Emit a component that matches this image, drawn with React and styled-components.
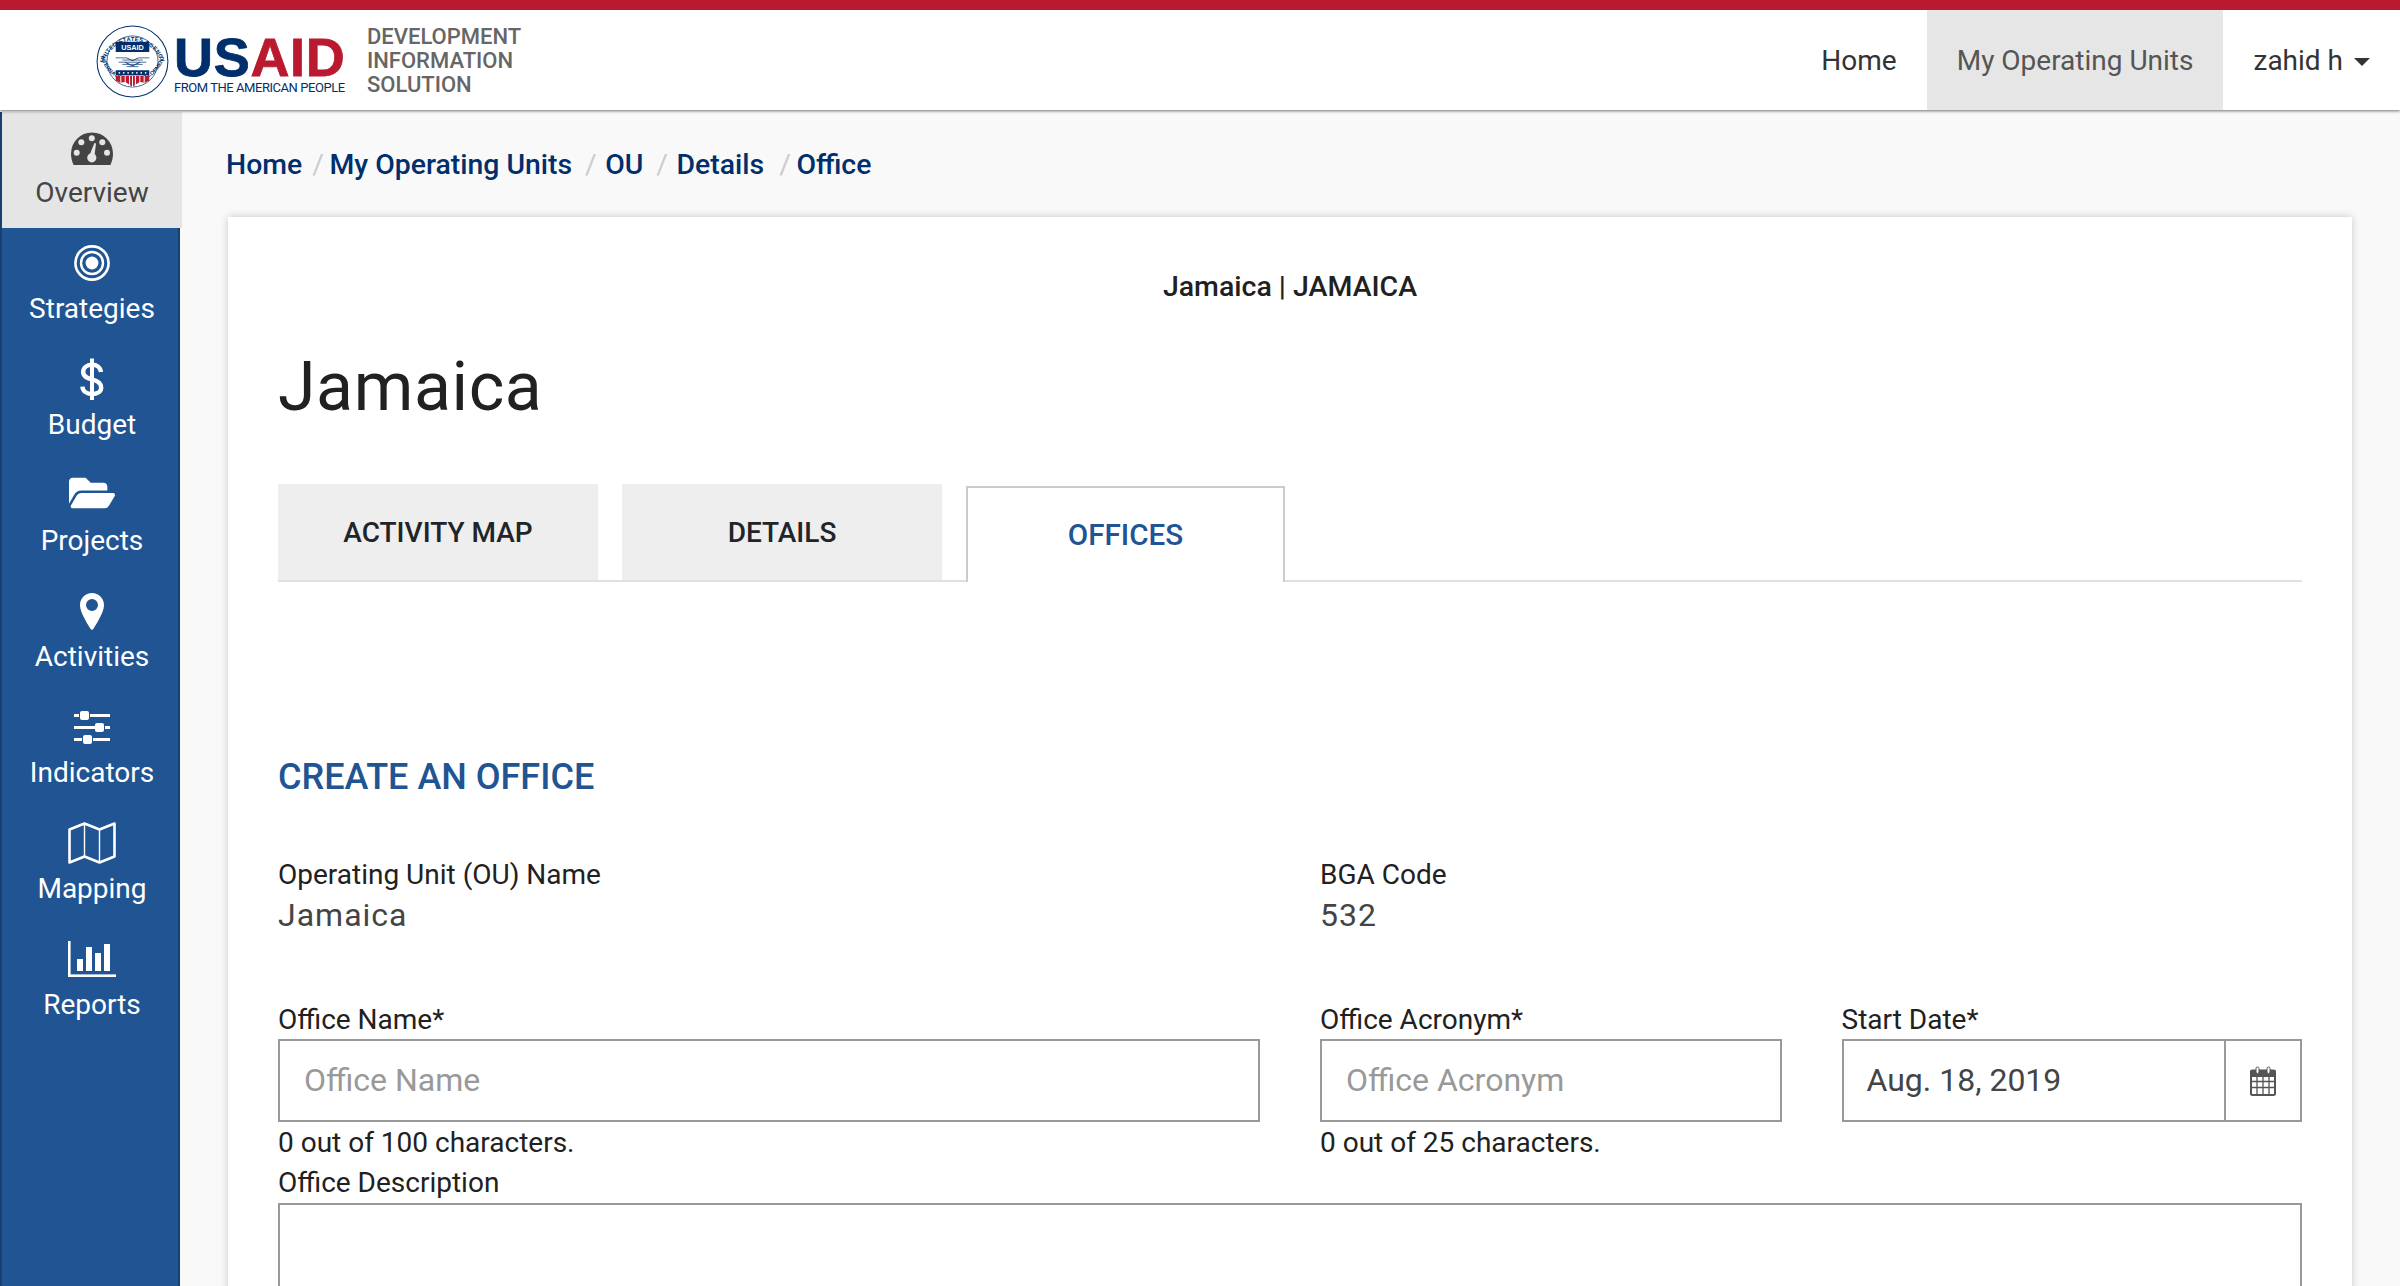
import React from "react";
import styled, { createGlobalStyle } from "styled-components";
import { FaFolderOpen } from "react-icons/fa";

const Global = createGlobalStyle`
  html, body { margin: 0; padding: 0; height: 1286px; overflow: hidden; background: #f9f9f9; }
  body { font-family: Roboto, "Liberation Sans", sans-serif; color: #212121; }
  * { box-sizing: border-box; }
`;

const Page = styled.div`
  width: 2400px; height: 1286px; overflow: hidden; display: flex; flex-direction: column;
`;
const Header = styled.header`
  flex: none; height: 110px; background: #fff; border-top: 10px solid #ba1a30;
  display: flex; align-items: stretch; justify-content: space-between;
  box-shadow: 0 1px 3px rgba(0,0,0,.55); position: relative; z-index: 2;
`;
const Brand = styled.div`
  display: flex; align-items: center; padding-left: 96px;
`;
const Seal = styled.svg` width: 73px; height: 73px; flex: none; display: block; margin-top: 2px; `;
const Wordmark = styled.div`
  margin-left: 5px; width: 170px; margin-top: 9px; display: flex; flex-direction: column; font-family: "Liberation Sans", sans-serif;
`;
const WordTop = styled.div`
  font-size: 54px; line-height: 44px; height: 44px; font-weight: 700; letter-spacing: .7px; color: #002f6c;
  -webkit-text-stroke: .8px currentColor; white-space: nowrap;
`;
const Red = styled.span` color: #ba1a30; `;
const WordSub = styled.div`
  font-family: Roboto, sans-serif; font-size: 13px; line-height: 14px; margin-top: 2px; color: #002f6c;
  letter-spacing: -.45px; white-space: nowrap;
`;
const BrandTitle = styled.div`
  margin: 2px 0 0 23px; font-size: 22px; line-height: 24px; font-weight: 500; color: #666;
`;
const TopNav = styled.nav` display: flex; align-items: stretch; `;
const TopLink = styled.div`
  display: flex; align-items: center; padding: 0 30px; font-size: 28px;
  color: ${p => p.$active ? "#555" : "#333"}; background: ${p => p.$active ? "#e6e6e6" : "transparent"};
`;
const Caret = styled.span`
  display: inline-block; margin-left: 11px; margin-top: 3px; border-top: 8px solid #333;
  border-left: 8px solid transparent; border-right: 8px solid transparent;
`;

const Body = styled.div` flex: 1; display: flex; min-height: 0; `;
const Side = styled.aside`
  flex: none; width: 180px; background: #205493; border-left: 2px solid #163f73; border-right: 2px solid #163f73;
  display: flex; flex-direction: column; margin-top: 2px;
`;
const SideItem = styled.div`
  height: 116px; flex: none; width: 180px; display: flex; flex-direction: column; align-items: center;
  padding-top: 16px; font-size: 28px;
  color: ${p => p.$active ? "#444" : "#fff"};
  background: ${p => p.$active ? "#e5e5e5" : "transparent"};
`;
const IconBox = styled.div`
  height: 38px; width: 50px; display: flex; align-items: center; justify-content: center; flex: none;
  padding: ${p => p.$down || 0} 0 ${p => p.$up || 0};
`;
const SideLabel = styled.div` line-height: 32px; margin-top: 11px; white-space: nowrap; `;

const Main = styled.main` flex: 1; min-width: 0; padding: 0 48px 0 48px; `;
const Crumbs = styled.div`
  height: 107px; display: flex; align-items: center; padding-top: 1px; margin-left: -2px;
  font-size: 28.4px; font-weight: 500; color: #002f6c;
`;
const Sep = styled.span`
  color: #ccc; font-weight: 400; margin: 0 ${p => p.$r} 0 ${p => p.$l};
`;
const Card = styled.section`
  background: #fff; height: 1100px; padding: 51px 50px 0; box-shadow: 0 0 8px rgba(0,0,0,.2);
`;
const Pre = styled.div` text-align: center; font-size: 28.5px; font-weight: 500; line-height: 38px; color: #212121; `;
const Title = styled.h1`
  margin: 40px 0 0; font-size: 68px; line-height: 82px; font-weight: 400; color: #212121; letter-spacing: .6px;
`;
const Tabs = styled.div`
  margin-top: 56px; height: 98px; display: flex; align-items: flex-start; border-bottom: 2px solid #e0e0e0; gap: 24px;
`;
const Tab = styled.div`
  width: 320px; height: 96px; background: #eee;
  display: flex; align-items: center; justify-content: center;
  font-size: 28px; font-weight: 500; color: #212529;
`;
const ActiveTab = styled(Tab)`
  width: 319px; height: 96px; margin-top: 2px; background: #fff;
  border: 2px solid #ccc; border-bottom: 0; color: #205493; font-size: 29.6px;
`;
const Section = styled.h2`
  margin: 171px 0 0; height: 48px; font-size: 36px; line-height: 48px; font-weight: 500; color: #205493;
`;
const InfoRow = styled.div`
  margin-top: 56px; display: grid; grid-template-columns: 982px 1fr; column-gap: 60px;
`;
const Label = styled.div` font-size: 28px; line-height: 36px; color: #212121; white-space: nowrap; `;
const Value = styled.div` font-size: 32px; line-height: 40px; margin-top: 2px; color: #444; letter-spacing: 1px; `;
const FormRow = styled.div`
  margin-top: 67px; display: grid; grid-template-columns: 982px 461.5px 1fr; column-gap: 60px;
`;
const Field = styled.div` display: flex; flex-direction: column; `;
const FieldBox = styled.div`
  height: 83px; margin-top: 1px; border: 2px solid #999; display: flex; align-items: center; background: #fff;
  padding: 0 0 2px 24px; font-size: 32px; color: ${p => p.$ph ? "#999" : "#444"};
`;
const DateBox = styled(FieldBox)` padding: 0; align-items: stretch; `;
const DateText = styled.div` flex: 1; padding: 0 0 2px 23px; display: flex; align-items: center; `;
const Addon = styled.div`
  width: 76px; border-left: 2px solid #999; display: flex; align-items: center; justify-content: center; flex: none;
`;
const Help = styled.div` font-size: 28px; line-height: 36px; margin-top: 3px; color: #212121; `;
const Description = styled.div` margin-top: 4px; `;
const Area = styled.div` height: 200px; margin-top: 2px; border: 2px solid #999; `;

const Svg = styled.svg` display: block; flex: none; `;

const GaugeIcon = () => (
  <Svg width="42" height="33" viewBox="0 0 42 33">
    <path d="M2.6 33 C0.9 29.6 0 25.6 0 21.5 A21 21 0 0 1 42 21.5 C42 25.6 41.1 29.6 39.4 33 Z" fill="#444" />
    <g fill="#e5e5e5">
      <circle cx="20.8" cy="6.3" r="3" />
      <circle cx="10.3" cy="10.3" r="3" />
      <circle cx="31.3" cy="10.3" r="3" />
      <circle cx="5.7" cy="20.7" r="3" />
      <circle cx="36" cy="20.7" r="3" />
      <circle cx="20.8" cy="25.8" r="4.6" />
      <path d="M18.6 23 L23.4 11 L25 11.5 L23.4 24.5 Z" />
    </g>
  </Svg>
);
const TargetIcon = () => (
  <Svg width="38" height="38" viewBox="0 0 38 38" fill="none" stroke="#fff">
    <circle cx="19" cy="19" r="16.6" strokeWidth="2.6" />
    <circle cx="19" cy="19" r="11" strokeWidth="2.4" />
    <circle cx="19" cy="19" r="6.4" fill="#fff" stroke="none" />
  </Svg>
);
const DollarIcon = () => (
  <Svg width="24" height="42" viewBox="0 0 24 42" fill="none" stroke="#fff">
    <path d="M12 0.5V42" strokeWidth="4" />
    <path d="M21 14 C20.5 9.5 17 6.8 12 6.8 C6.5 6.8 3.2 9.8 3.2 14 C3.2 18.5 6.8 20 12 21.4 C17.5 22.8 21.2 24.8 21.2 29.4 C21.2 33.4 17.5 36 12 36 C6.8 36 2.8 33.4 2.4 28.6" strokeWidth="4.4" />
  </Svg>
);
const MarkerIcon = () => (
  <Svg width="24" height="37" viewBox="0 0 24 37" fill="#fff">
    <path fillRule="evenodd" d="M12 0 C5.4 0 0 5.4 0 12 C0 20 9 33 10.5 35.8 C11.2 37 12.8 37 13.5 35.8 C15 33 24 20 24 12 C24 5.4 18.6 0 12 0 Z M12 6 a6 6 0 1 1 0 12 a6 6 0 1 1 0 -12 Z" />
  </Svg>
);
const SlidersIcon = () => (
  <Svg width="36" height="34" viewBox="0 0 36 34" fill="#fff">
    <rect x="0" y="4" width="5" height="3" />
    <rect x="16" y="4" width="20" height="3" />
    <rect x="6" y="1" width="9" height="9" rx="2" />
    <rect x="0" y="16" width="21" height="3" />
    <rect x="31" y="16" width="5" height="3" />
    <rect x="21" y="13" width="9" height="9" rx="2" />
    <rect x="0" y="28" width="8" height="3" />
    <rect x="19" y="28" width="17" height="3" />
    <rect x="9" y="25" width="9" height="9" rx="2" />
  </Svg>
);
const MapIcon = () => (
  <Svg width="48" height="42" viewBox="0 0 48 42" fill="none" stroke="#fff" strokeLinejoin="round">
    <path d="M1.5 7.5 L16.5 1.5 L31.5 7.5 L46.5 1.5 V34.5 L31.5 40.5 L16.5 34.5 L1.5 40.5 Z" strokeWidth="2.6" />
    <path d="M16.5 1.5 V34.5 M31.5 7.5 V40.5" strokeWidth="1.4" />
  </Svg>
);
const ReportIcon = () => (
  <Svg width="48" height="36" viewBox="0 0 48 36" fill="#fff">
    <rect x="0" y="0" width="2.6" height="36" />
    <rect x="0" y="33.4" width="48" height="2.6" />
    <rect x="9" y="18" width="6" height="12" />
    <rect x="18" y="6" width="6" height="24" />
    <rect x="27" y="12" width="6" height="18" />
    <rect x="36" y="3" width="6" height="27" />
  </Svg>
);
const CalendarIcon = () => (
  <Svg width="26" height="30" viewBox="0 0 26 30" fill="none" stroke="#555">
    <rect x="1" y="4.5" width="24" height="24.5" rx="1.5" strokeWidth="2" />
    <rect x="1" y="4.5" width="24" height="6" fill="#555" strokeWidth="1" />
    <path d="M1 15.5H25M1 21.5H25M7 10V29M13 10V29M19 10V29" strokeWidth="1.3" />
    <rect x="6" y="1" width="3" height="6.5" rx="1.5" fill="#fff" strokeWidth="1" />
    <rect x="17" y="1" width="3" height="6.5" rx="1.5" fill="#fff" strokeWidth="1" />
  </Svg>
);

const SealMark = () => (
  <Seal viewBox="0 0 100 100">
    <defs>
      <path id="sealTop" d="M 10 56 A 40.5 40.5 0 0 1 90 56" />
      <path id="sealBot" d="M 6 42 A 45 45 0 0 0 94 42" />
    </defs>
    <circle cx="50" cy="50" r="48.5" fill="#fff" stroke="#002f6c" strokeWidth="1.4" />
    <circle cx="50" cy="50" r="35" fill="none" stroke="#002f6c" strokeWidth="1" />
    <text fontSize="8" fontWeight="700" fill="#002f6c" fontFamily="Liberation Sans, sans-serif" letterSpacing=".4">
      <textPath href="#sealTop" startOffset="50%" textAnchor="middle">UNITED STATES AGENCY</textPath>
    </text>
    <text fontSize="7.4" fontWeight="700" fill="#002f6c" fontFamily="Liberation Sans, sans-serif" letterSpacing=".1">
      <textPath href="#sealBot" startOffset="50%" textAnchor="middle">INTERNATIONAL DEVELOPMENT</textPath>
    </text>
    <rect x="27" y="23" width="46" height="14" fill="#002f6c" />
    <text x="50" y="33.8" textAnchor="middle" fontSize="10" fontWeight="700" fill="#fff" fontFamily="Liberation Sans, sans-serif">USAID</text>
    <g stroke="#002f6c" strokeWidth="1.1" fill="none" opacity=".85">
      <path d="M27 45 H42 M36 48 H64 M31 51 H69 M36 54 H64 M58 45 H73 M42 57 H58" />
      <path d="M42 45 L50 49 L58 45 M40 51 L50 56 L60 51" strokeWidth="1.4" />
    </g>
    <rect x="27" y="62" width="46" height="7" fill="#002f6c" />
    <g fill="#fff">
      <circle cx="32" cy="65.5" r="1.2" /><circle cx="38" cy="65.5" r="1.2" /><circle cx="44" cy="65.5" r="1.2" />
      <circle cx="50" cy="65.5" r="1.2" /><circle cx="56" cy="65.5" r="1.2" /><circle cx="62" cy="65.5" r="1.2" />
      <circle cx="68" cy="65.5" r="1.2" />
    </g>
    <path d="M27 70 H73 V76 L67 79 L60 78 L55 81 L50 85 L45 81 L40 78 L33 79 L27 76 Z" fill="#ba1a30" />
    <path d="M34 70V79M40 70V80M46 70V83M50 70V85M54 70V83M60 70V80M66 70V79" stroke="#fff" strokeWidth="1.4" />
  </Seal>
);

const NAV = [
  { label: "Overview", icon: <GaugeIcon />, active: true, down: "3px" },
  { label: "Strategies", icon: <TargetIcon /> },
  { label: "Budget", icon: <DollarIcon /> },
  { label: "Projects", icon: <FaFolderOpen size={46} />, up: "5px" },
  { label: "Activities", icon: <MarkerIcon /> },
  { label: "Indicators", icon: <SlidersIcon /> },
  { label: "Mapping", icon: <MapIcon /> },
  { label: "Reports", icon: <ReportIcon /> },
];

export default function App() {
  return (
    <Page>
      <Global />
      <Header>
        <Brand>
          <SealMark />
          <Wordmark>
            <WordTop>US<Red>AID</Red></WordTop>
            <WordSub>FROM THE AMERICAN PEOPLE</WordSub>
          </Wordmark>
          <BrandTitle>DEVELOPMENT<br />INFORMATION<br />SOLUTION</BrandTitle>
        </Brand>
        <TopNav>
          <TopLink>Home</TopLink>
          <TopLink $active>My Operating Units</TopLink>
          <TopLink>zahid h<Caret /></TopLink>
        </TopNav>
      </Header>
      <Body>
        <Side>
          {NAV.map(n => (
            <SideItem key={n.label} $active={n.active}>
              <IconBox $down={n.down} $up={n.up}>{n.icon}</IconBox>
              <SideLabel>{n.label}</SideLabel>
            </SideItem>
          ))}
        </Side>
        <Main>
          <Crumbs>
            Home<Sep $l="10px" $r="5.5px">/</Sep>My Operating Units<Sep $l="13px" $r="8.4px">/</Sep>OU<Sep $l="13px" $r="8.5px">/</Sep>Details<Sep $l="15px" $r="5.5px">/</Sep>Office
          </Crumbs>
          <Card>
            <Pre>Jamaica | JAMAICA</Pre>
            <Title>Jamaica</Title>
            <Tabs>
              <Tab>ACTIVITY MAP</Tab>
              <Tab>DETAILS</Tab>
              <ActiveTab>OFFICES</ActiveTab>
            </Tabs>
            <Section>CREATE AN OFFICE</Section>
            <InfoRow>
              <div><Label>Operating Unit (OU) Name</Label><Value>Jamaica</Value></div>
              <div><Label>BGA Code</Label><Value>532</Value></div>
            </InfoRow>
            <FormRow>
              <Field>
                <Label>Office Name*</Label>
                <FieldBox $ph>Office Name</FieldBox>
                <Help>0 out of 100 characters.</Help>
              </Field>
              <Field>
                <Label>Office Acronym*</Label>
                <FieldBox $ph>Office Acronym</FieldBox>
                <Help>0 out of 25 characters.</Help>
              </Field>
              <Field>
                <Label>Start Date*</Label>
                <DateBox>
                  <DateText>Aug. 18, 2019</DateText>
                  <Addon><CalendarIcon /></Addon>
                </DateBox>
              </Field>
            </FormRow>
            <Description>
              <Label>Office Description</Label>
              <Area />
            </Description>
          </Card>
        </Main>
      </Body>
    </Page>
  );
}
